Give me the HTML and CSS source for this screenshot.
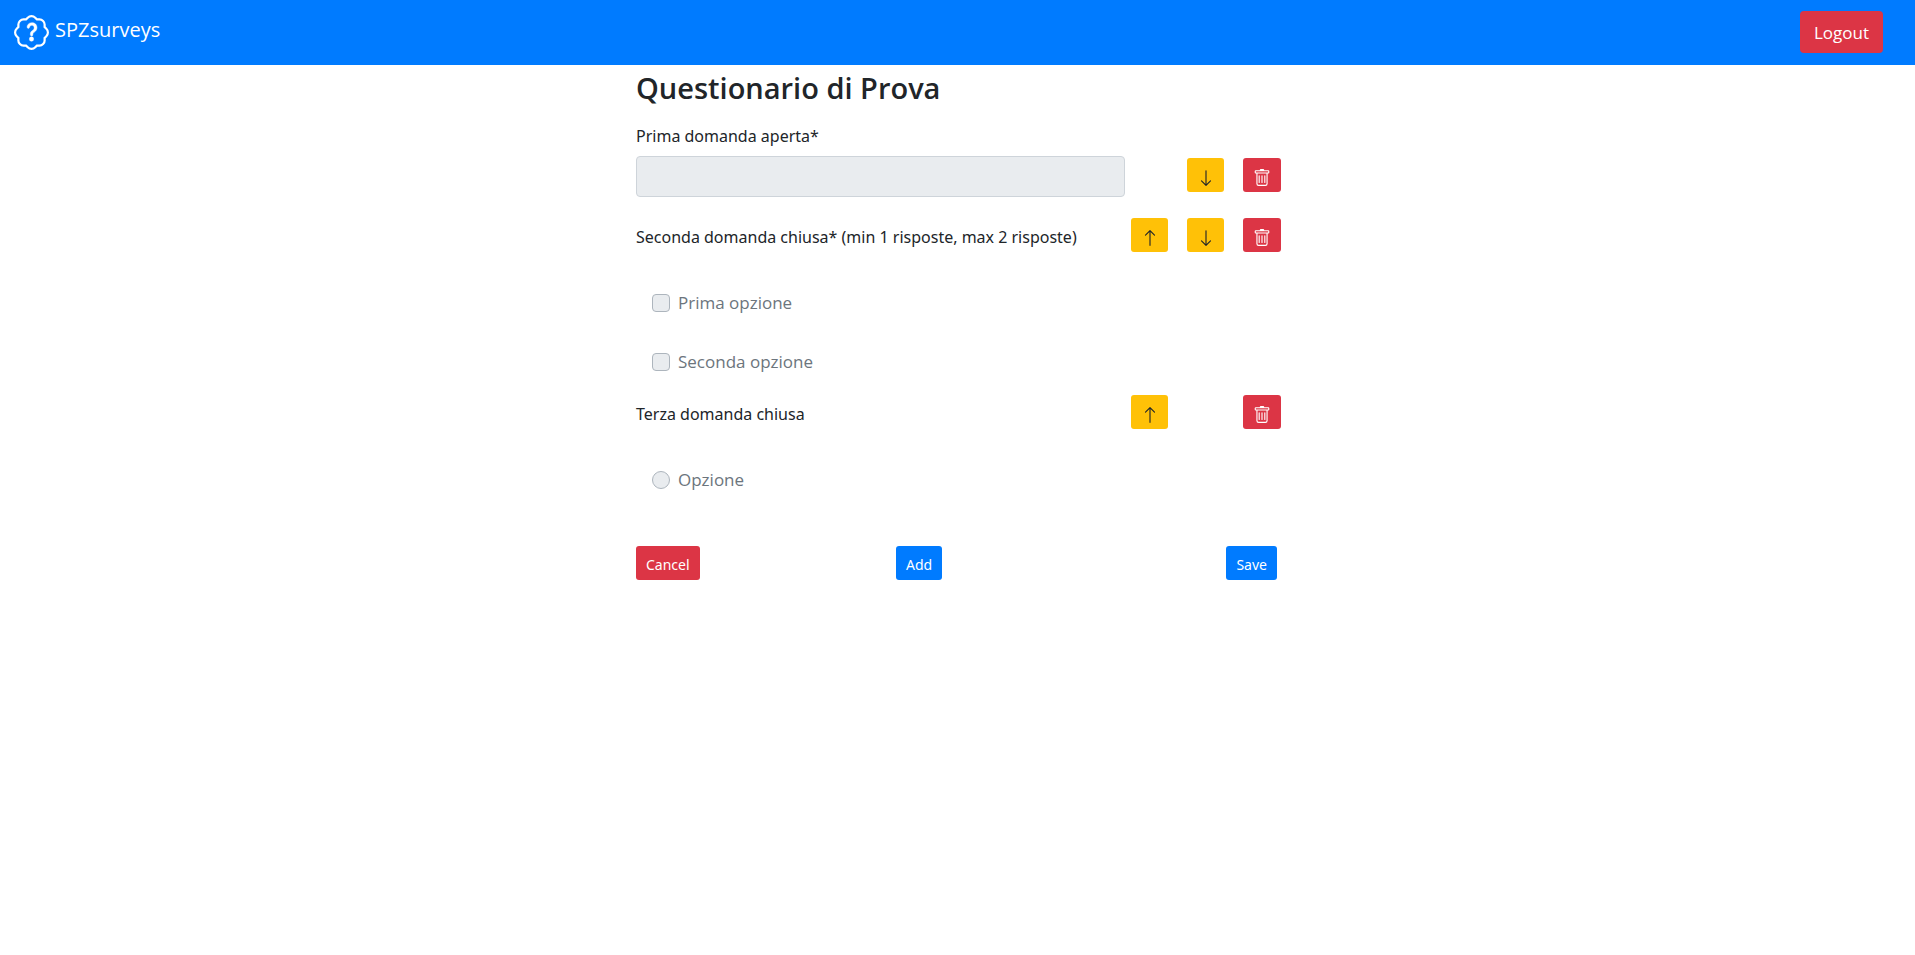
FILE: index.html
```html
<!DOCTYPE html>
<html lang="it">
<head>
<meta charset="utf-8">
<meta name="viewport" content="width=device-width, initial-scale=1">
<title>SPZsurveys</title>
<link rel="stylesheet" href="styles.css">
</head>
<body>
<svg class="sprite" aria-hidden="true">
  <symbol id="up" viewBox="0 0 16 16"><path fill-rule="evenodd" d="M8 15a.5.5 0 0 0 .5-.5V2.707l3.146 3.147a.5.5 0 0 0 .708-.708l-4-4a.5.5 0 0 0-.708 0l-4 4a.5.5 0 1 0 .708.708L7.5 2.707V14.500A.5.5 0 0 0 8 15z"/></symbol>
  <symbol id="down" viewBox="0 0 16 16"><path fill-rule="evenodd" d="M8 1a.5.5 0 0 1 .5.5v11.793l3.146-3.147a.5.5 0 0 1 .708.708l-4 4a.5.5 0 0 1-.708 0l-4-4a.5.5 0 0 1 .708-.708L7.500 13.293V1.500A.5.5 0 0 1 8 1z"/></symbol>
  <symbol id="trash" viewBox="0 0 16 16"><path d="M5.500 5.500A.5.5 0 0 1 6 6v6a.5.5 0 0 1-1 0V6a.5.5 0 0 1 .5-.5zm2.500 0a.5.5 0 0 1 .5.5v6a.5.5 0 0 1-1 0V6a.5.5 0 0 1 .5-.5zm3 .5a.5.5 0 0 0-1 0v6a.5.5 0 0 0 1 0V6z"/><path fill-rule="evenodd" d="M14.500 3a1 1 0 0 1-1 1H13v9a2 2 0 0 1-2 2H5a2 2 0 0 1-2-2V4h-.5a1 1 0 0 1-1-1V2a1 1 0 0 1 1-1H6a1 1 0 0 1 1-1h2a1 1 0 0 1 1 1h3.500a1 1 0 0 1 1 1v1zM4.118 4 4 4.059V13a1 1 0 0 0 1 1h6a1 1 0 0 0 1-1V4.059L11.882 4H4.118zM2.500 3V2h11v1h-11z"/></symbol>
</svg>
<header class="navbar">
  <a class="brand" href="#">
    <svg class="brand-icon" viewBox="0 0 16 16" fill="currentColor" aria-hidden="true">
      <path stroke="currentColor" stroke-width=".2" d="M8.050 9.600c.336 0 .504-.24.554-.627.040-.534.198-.815.847-1.260.673-.475 1.049-1.090 1.049-1.986 0-1.325-.92-2.227-2.262-2.227-1.020 0-1.792.492-2.100 1.290A1.710 1.710 0 0 0 6 5.480c0 .393.203.64.545.64.272 0 .455-.147.564-.510.158-.592.525-.915 1.074-.915.610 0 1.030.446 1.030 1.084 0 .563-.208.885-.822 1.325-.619.433-.926.914-.926 1.640v.111c0 .428.208.745.585.745zM7.001 11a1 1 0 1 1 2 0 1 1 0 0 1-2 0z"/>
      <path d="m10.273 2.513-.921-.944.715-.698.622.637.890-.011a2.890 2.890 0 0 1 2.924 2.924l-.010.890.636.622a2.890 2.890 0 0 1 0 4.134l-.637.622.011.890a2.890 2.890 0 0 1-2.924 2.924l-.890-.010-.622.636a2.890 2.890 0 0 1-4.134 0l-.622-.637-.890.011a2.890 2.890 0 0 1-2.924-2.924l.010-.890-.636-.622a2.890 2.890 0 0 1 0-4.134l.637-.622-.011-.890a2.890 2.890 0 0 1 2.924-2.924l.890.010.622-.636a2.890 2.890 0 0 1 4.134 0l-.715.698a1.890 1.890 0 0 0-2.704 0l-.920.944-1.320-.016a1.890 1.890 0 0 0-1.911 1.912l.016 1.318-.944.921a1.890 1.890 0 0 0 0 2.704l.944.920-.016 1.320a1.890 1.890 0 0 0 1.912 1.911l1.318-.016.921.944a1.890 1.890 0 0 0 2.704 0l.920-.944 1.320.016a1.890 1.890 0 0 0 1.911-1.912l-.016-1.318.944-.921a1.890 1.890 0 0 0 0-2.704l-.944-.920.016-1.320a1.890 1.890 0 0 0-1.912-1.911l-1.318.016z"/>
    </svg>
    <span>SPZsurveys</span>
  </a>
  <button class="btn btn-danger" type="button">Logout</button>
</header>
<main class="survey">
  <h1 class="title">Questionario di Prova</h1>
  <form class="form">
    <section class="question">
      <div class="prompt">
        <label class="prompt-label" for="q1">Prima domanda aperta*</label>
        <input class="text-input" id="q1" type="text" disabled>
      </div>
      <div class="actions actions-low">
        <button class="btn-sm btn-warning slot-down" type="button" aria-label="Sposta giù"><svg class="icon"><use href="#down"/></svg></button>
        <button class="btn-sm btn-danger slot-trash" type="button" aria-label="Elimina"><svg class="icon"><use href="#trash"/></svg></button>
      </div>
    </section>
    <section class="question">
      <p class="prompt">Seconda domanda chiusa* (min 1 risposte, max 2 risposte)</p>
      <div class="actions">
        <button class="btn-sm btn-warning slot-up" type="button" aria-label="Sposta su"><svg class="icon"><use href="#up"/></svg></button>
        <button class="btn-sm btn-warning slot-down" type="button" aria-label="Sposta giù"><svg class="icon"><use href="#down"/></svg></button>
        <button class="btn-sm btn-danger slot-trash" type="button" aria-label="Elimina"><svg class="icon"><use href="#trash"/></svg></button>
      </div>
      <div class="options">
        <div class="option"><input class="check" id="o1" type="checkbox" disabled><label for="o1">Prima opzione</label></div>
        <div class="option"><input class="check" id="o2" type="checkbox" disabled><label for="o2">Seconda opzione</label></div>
      </div>
    </section>
    <section class="question">
      <p class="prompt">Terza domanda chiusa</p>
      <div class="actions">
        <button class="btn-sm btn-warning slot-up" type="button" aria-label="Sposta su"><svg class="icon"><use href="#up"/></svg></button>
        <button class="btn-sm btn-danger slot-trash" type="button" aria-label="Elimina"><svg class="icon"><use href="#trash"/></svg></button>
      </div>
      <div class="options">
        <div class="option"><input class="check radio" id="o3" type="radio" disabled><label for="o3">Opzione</label></div>
      </div>
    </section>
    <footer class="footer">
      <button class="btn-sm btn-danger" type="button">Cancel</button>
      <button class="btn-sm btn-primary" type="button">Add</button>
      <button class="btn-sm btn-primary" type="button">Save</button>
    </footer>
  </form>
</main>
</body>
</html>
```
FILE: styles.css
```css
* { box-sizing: border-box; }
body {
  margin: 0;
  background: #fff;
  color: #212529;
  font-family: "Segoe UI", "Open Sans", "Noto Sans", sans-serif;
  font-size: 17px;
  line-height: 26px;
}
.sprite { display: none; }
.navbar {
  display: flex;
  align-items: center;
  justify-content: space-between;
  padding: 11px 32px 12px 14px;
  background: #007bff;
}
.brand {
  display: flex;
  align-items: center;
  gap: 6px;
  color: #fff;
  font-size: 20px;
  text-decoration: none;
}
.brand span { padding-bottom: 4px; }
.brand-icon { width: 35px; height: 35px; }
.btn, .btn-sm {
  border: 0;
  border-radius: 4px;
  color: #fff;
  font-family: inherit;
}
.btn { height: 42px; padding: 0 14px; font-size: 17px; }
.btn-sm {
  display: flex;
  align-items: center;
  justify-content: center;
  height: 34px;
  padding: 3px 10px 0;
  border-radius: 3px;
  font-family: "Segoe UI", "Noto Sans", sans-serif;
  font-size: 14px;
}
.btn-danger { background: #dc3545; }
.btn-primary { background: #007bff; }
.btn-warning { background: #ffc107; color: #212529; }
.icon { width: 18px; height: 18px; fill: currentColor; }
.survey {
  width: 100%;
  max-width: 647px;
  margin: 0 auto;
  padding-left: 2px;
}
.title {
  margin: 0;
  padding: 4px 0 10px;
  font-size: 29px;
  font-weight: 600;
  line-height: 38px;
}
.question {
  display: grid;
  grid-template-columns: minmax(0, 1fr) auto;
  column-gap: 6px;
}
.question + .question { margin-top: 21px; }
.question + .question + .question { margin-top: 20px; }
.prompt {
  margin: 0;
  padding-top: 6px;
  font-family: "Segoe UI", "Noto Sans", sans-serif;
  font-size: 16px;
}
.prompt-label { display: block; margin-bottom: 7px; }
.text-input {
  display: block;
  width: 100%;
  height: 41px;
  border: 1px solid #ced4da;
  border-radius: 4px;
  background: #e9ecef;
}
.actions {
  display: grid;
  grid-template-columns: 37px 37px 38px;
  column-gap: 19px;
  align-content: start;
}
.actions-low { align-content: end; padding-bottom: 5px; }
.actions .btn-sm { padding: 6px 0 0; }
.slot-up { grid-column: 1; }
.slot-down { grid-column: 2; }
.slot-trash { grid-column: 3; }
.options { grid-column: 1 / -1; padding: 38px 0 0 16px; }
.option {
  display: flex;
  align-items: center;
  gap: 8px;
  color: #6c757d;
}
.option + .option { margin-top: 33px; }
.check {
  appearance: none;
  width: 18px;
  height: 18px;
  margin: 0;
  border: 1px solid #adb5bd;
  border-radius: 4px;
  background: #e9ecef;
}
.radio { border-radius: 50%; }
.footer {
  display: grid;
  grid-template-columns: 260px 1fr auto;
  justify-items: start;
  margin-top: 53px;
  padding-right: 4px;
}
```
